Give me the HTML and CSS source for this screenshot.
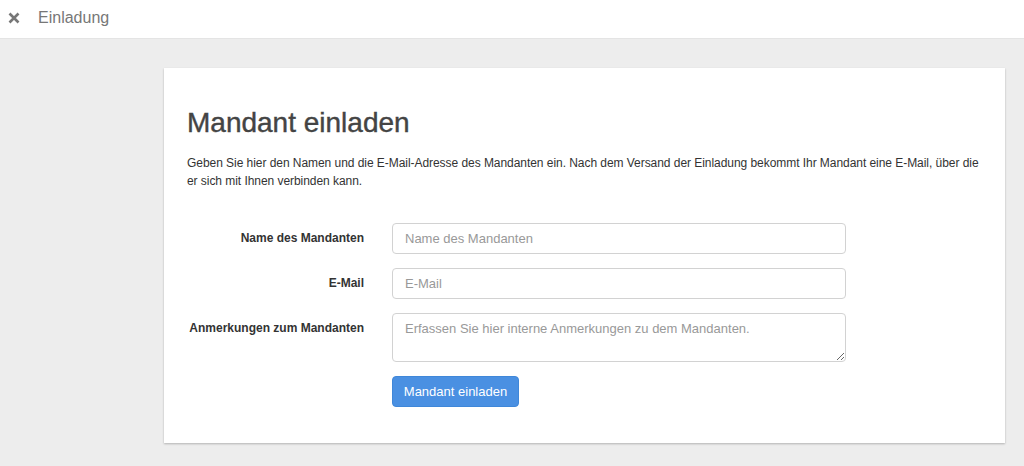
FILE: index.html
```html
<!DOCTYPE html>
<html lang="de">
<head>
<meta charset="utf-8">
<title>Einladung</title>
<link rel="stylesheet" href="styles.css">
</head>
<body>
<header class="topbar">
  <svg class="close-icon" width="12" height="12" viewBox="0 0 12 12" aria-hidden="true">
    <path d="M1.5 1.5 L10.5 10.5 M10.5 1.5 L1.5 10.5" stroke="#777" stroke-width="2.6" stroke-linecap="butt" fill="none"/>
  </svg>
  <span class="topbar-title">Einladung</span>
</header>
<main class="page">
  <section class="card">
    <h1 class="card-title">Mandant einladen</h1>
    <p class="card-text">Geben Sie hier den Namen und die E-Mail-Adresse des Mandanten ein. Nach dem Versand der Einladung bekommt Ihr Mandant eine E-Mail, über die er sich mit Ihnen verbinden kann.</p>
    <form class="form">
      <label class="form-label" for="name">Name des Mandanten</label>
      <input class="form-input" id="name" type="text" placeholder="Name des Mandanten">
      <label class="form-label" for="email">E-Mail</label>
      <input class="form-input" id="email" type="email" placeholder="E-Mail">
      <label class="form-label" for="notes">Anmerkungen zum Mandanten</label>
      <textarea class="form-input form-textarea" id="notes" placeholder="Erfassen Sie hier interne Anmerkungen zu dem Mandanten."></textarea>
      <div class="form-actions">
        <button class="btn-primary" type="button">Mandant einladen</button>
      </div>
    </form>
  </section>
</main>
</body>
</html>
```
FILE: styles.css
```css
* { box-sizing: border-box; }
html, body {
  margin: 0;
  padding: 0;
  height: 100%;
}
body {
  background: #ededed;
  font-family: "Liberation Sans", Arial, sans-serif;
  color: #333;
}
.topbar {
  height: 39px;
  background: #fff;
  border-bottom: 1px solid #e4e4e4;
  display: flex;
  align-items: center;
  padding-left: 8px;
}
.close-icon {
  display: block;
  margin-top: -2px;
}
.topbar-title {
  margin-left: 18px;
  font-size: 16px;
  color: #777;
  margin-top: -2px;
}
.page {
  padding: 29px 19px 24px 164px;
}
.card {
  background: #fff;
  box-shadow: 0 1px 2px rgba(0, 0, 0, 0.25);
  padding: 39px 18px 36px 23px;
}
.card-title {
  margin: 0;
  font-size: 28px;
  line-height: 31px;
  font-weight: normal;
  color: #444;
  -webkit-text-stroke: 0.4px #444;
}
.card-text {
  margin: 16px 0 0;
  font-size: 12px;
  line-height: 18px;
  letter-spacing: -0.05px;
  color: #333;
}
.form {
  margin-top: 33px;
  display: grid;
  grid-template-columns: 177px 454px;
  column-gap: 28px;
  row-gap: 14px;
}
.form-label {
  text-align: right;
  font-weight: bold;
  font-size: 12px;
  line-height: 18px;
  padding-top: 6px;
  color: #333;
}
.form-input {
  height: 31px;
  border: 1px solid #d2d2d2;
  border-radius: 4px;
  padding: 0 12px;
  font-family: "Liberation Sans", Arial, sans-serif;
  font-size: 13px;
  color: #333;
  background: #fff;
  outline: none;
}
.form-input::placeholder {
  color: #999;
}
.form-textarea {
  height: 49px;
  padding: 6px 12px;
  line-height: 18px;
  resize: vertical;
  display: block;
}
.form-actions {
  grid-column: 2;
}
.btn-primary {
  height: 31px;
  width: 127px;
  border: 1px solid #3f87d9;
  border-radius: 4px;
  background: #4a90e2;
  color: #fff;
  font-family: "Liberation Sans", Arial, sans-serif;
  font-size: 13px;
  padding: 0;
}
```
